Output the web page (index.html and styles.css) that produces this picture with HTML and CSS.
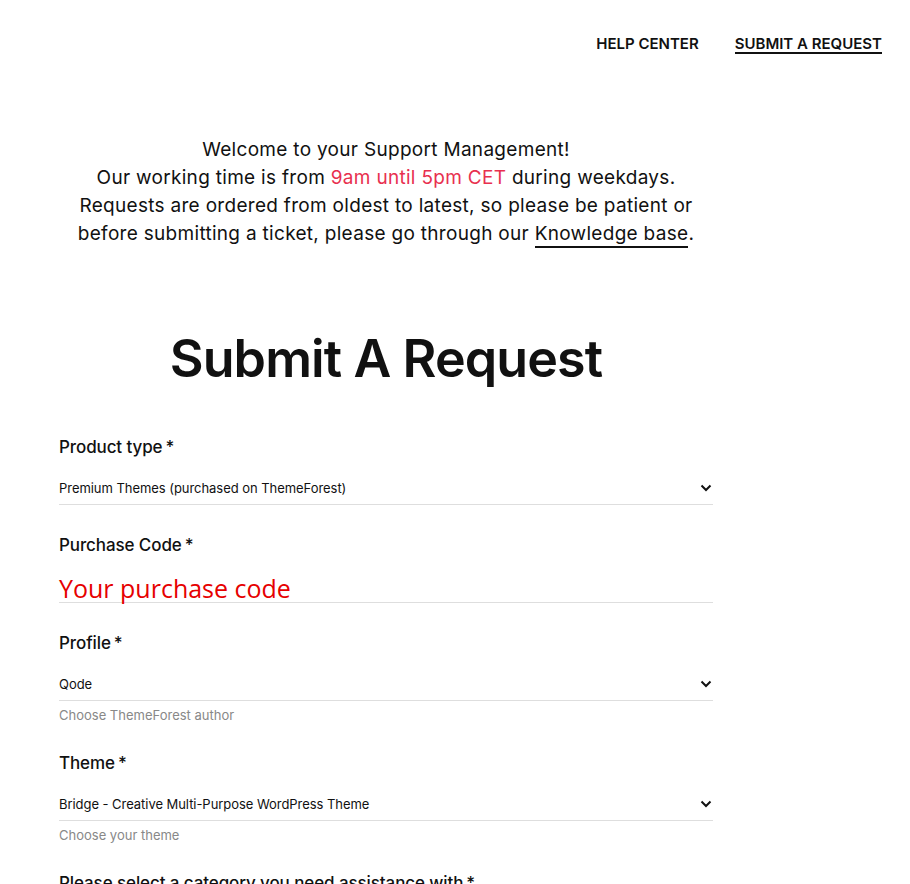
FILE: index.html
```html
<!DOCTYPE html>
<html lang="en">
<head>
<meta charset="utf-8">
<title>Submit A Request</title>
<link rel="stylesheet" href="styles.css">
</head>
<body>
<header class="topbar">
  <nav class="nav">
    <a class="nav-link" href="#">HELP CENTER</a>
    <a class="nav-link active" href="#">SUBMIT A REQUEST</a>
  </nav>
</header>
<main class="content">
  <p class="intro">
    Welcome to your Support Management!<br>
    Our working time is from <span class="accent">9am until 5pm CET</span> during weekdays.<br>
    Requests are ordered from oldest to latest, so please be patient or<br>
    before submitting a ticket, please go through our <a class="kb" href="#">Knowledge base</a>.
  </p>
  <h1 class="title">Submit A Request</h1>
  <form class="form">
    <div class="field">
      <label class="label">Product type<span class="req">*</span></label>
      <div class="select">
        <span class="select-value">Premium Themes (purchased on ThemeForest)</span>
        <svg class="chev" width="12" height="8" viewBox="0 0 12 8"><path d="M1.5 1.5 L6 6 L10.5 1.5" fill="none" stroke="#111" stroke-width="2"/></svg>
      </div>
    </div>
    <div class="field">
      <label class="label">Purchase Code<span class="req">*</span></label>
      <div class="input"><span class="placeholder">Your purchase code</span></div>
    </div>
    <div class="field">
      <label class="label">Profile<span class="req">*</span></label>
      <div class="select">
        <span class="select-value">Qode</span>
        <svg class="chev" width="12" height="8" viewBox="0 0 12 8"><path d="M1.5 1.5 L6 6 L10.5 1.5" fill="none" stroke="#111" stroke-width="2"/></svg>
      </div>
      <p class="hint">Choose ThemeForest author</p>
    </div>
    <div class="field">
      <label class="label">Theme<span class="req">*</span></label>
      <div class="select">
        <span class="select-value">Bridge - Creative Multi-Purpose WordPress Theme</span>
        <svg class="chev" width="12" height="8" viewBox="0 0 12 8"><path d="M1.5 1.5 L6 6 L10.5 1.5" fill="none" stroke="#111" stroke-width="2"/></svg>
      </div>
      <p class="hint">Choose your theme</p>
    </div>
    <div class="field">
      <label class="label">Please select a category you need assistance with<span class="req">*</span></label>
    </div>
  </form>
</main>
</body>
</html>
```
FILE: styles.css
```css
html, body {
  margin: 0;
  padding: 0;
  background: #fff;
  color: #111;
  font-family: Inter, "Noto Sans", sans-serif;
  overflow: hidden;
}
a { color: inherit; text-decoration: none; }

.topbar {
  display: flex;
  justify-content: flex-end;
  padding: 35px 28px 0 0;
  height: 85px;
  box-sizing: border-box;
}
.nav {
  display: flex;
  gap: 36px;
  align-items: flex-start;
}
.nav-link {
  font-size: 15px;
  font-weight: 600;
  line-height: 17px;
  padding-bottom: 0;
  border-bottom: 2px solid transparent;
}
.nav-link.active {
  border-bottom-color: #111;
}

.content {
  width: 654px;
  margin-left: 59px;
}

.intro {
  margin: 51px 0 0;
  text-align: center;
  font-size: 19px;
  line-height: 28px;
  font-weight: 400;
  color: #111;
  letter-spacing: 0.3px;
}
.accent { color: #e8304f; }
.kb {
  border-bottom: 2px solid #111;
  padding-bottom: 1px;
}

.title {
  margin: 79px 0 0;
  text-align: center;
  font-size: 52px;
  line-height: 64px;
  font-weight: 600;
  letter-spacing: -0.9px;
}

.form {
  margin-top: 44px;
  display: flex;
  flex-direction: column;
}
.field {
  display: flex;
  flex-direction: column;
  margin-bottom: 28px;
}
.label {
  font-size: 17px;
  font-weight: 500;
  line-height: 24px;
  letter-spacing: -0.1px;
}
.req { margin-left: 3px; }

.select {
  display: flex;
  justify-content: space-between;
  align-items: center;
  margin-top: 17px;
  height: 24px;
  border-bottom: 1px solid #dedede;
  padding-bottom: 4px;
}
.select-value {
  font-size: 13px;
  line-height: 18px;
  letter-spacing: -0.05px;
}
.chev { margin-right: 1px; }

.input {
  margin-top: 9px;
  height: 35px;
  padding-bottom: 1px;
  border-bottom: 1px solid #dedede;
  display: flex;
  align-items: flex-end;
}
.placeholder {
  font-family: "Open Sans", sans-serif;
  font-size: 25px;
  line-height: 26px;
  color: #e60000;
  letter-spacing: 0;
}

.hint {
  margin: 5px 0 -1px;
  font-size: 13px;
  line-height: 18px;
  color: #888;
}
```
